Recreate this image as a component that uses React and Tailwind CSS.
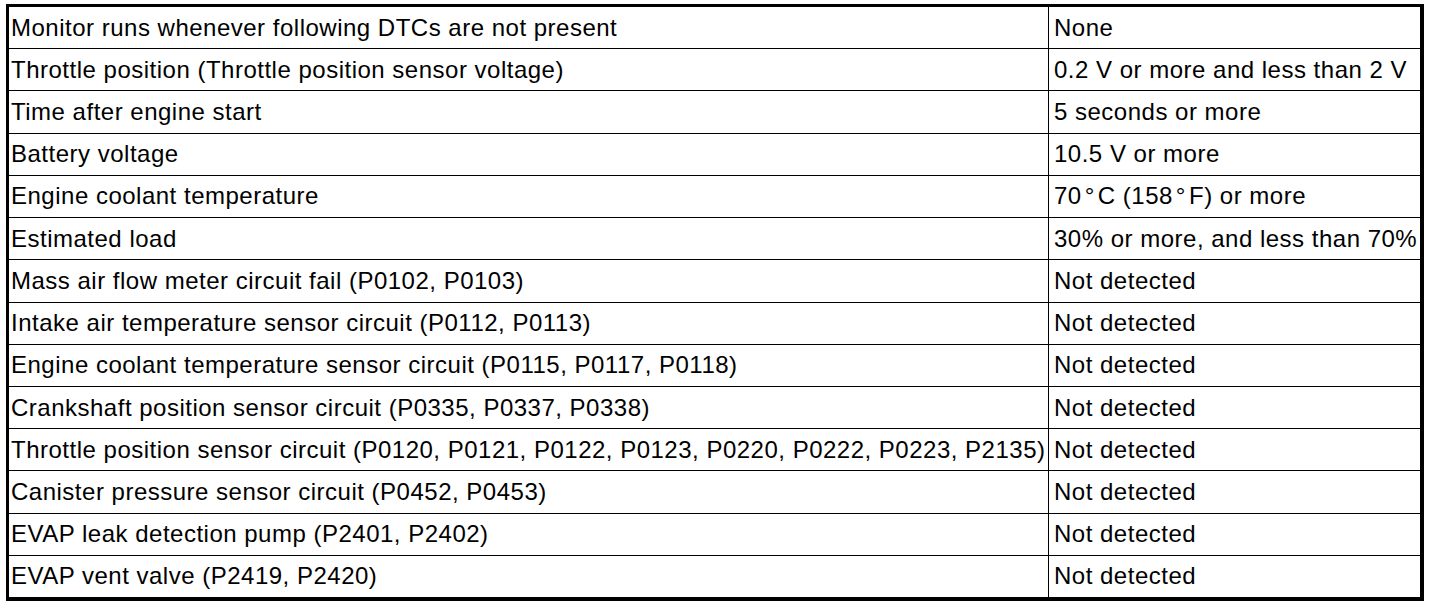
const rows = [
  ["Monitor runs whenever following DTCs are not present", "None"],
  ["Throttle position (Throttle position sensor voltage)", "0.2 V or more and less than 2 V"],
  ["Time after engine start", "5 seconds or more"],
  ["Battery voltage", "10.5 V or more"],
  ["Engine coolant temperature", "deg"],
  ["Estimated load", "30% or more, and less than 70%"],
  ["Mass air flow meter circuit fail (P0102, P0103)", "Not detected"],
  ["Intake air temperature sensor circuit (P0112, P0113)", "Not detected"],
  ["Engine coolant temperature sensor circuit (P0115, P0117, P0118)", "Not detected"],
  ["Crankshaft position sensor circuit (P0335, P0337, P0338)", "Not detected"],
  [
    "Throttle position sensor circuit (P0120, P0121, P0122, P0123, P0220, P0222, P0223, P2135)",
    "Not detected",
  ],
  ["Canister pressure sensor circuit (P0452, P0453)", "Not detected"],
  ["EVAP leak detection pump (P2401, P2402)", "Not detected"],
  ["EVAP vent valve (P2419, P2420)", "Not detected"],
];

const Deg = () => <span className="mx-[3px]">°</span>;

const App = () => {
  return (
    <div className="min-h-screen bg-white pt-[4px] pl-[6px]">
      <div
        className="w-[1418px] h-[597px] flex flex-col border-black border-t-[3px] border-l-[3px] border-r-4 border-b-4 text-black text-[24px] tracking-[0.5px] leading-none whitespace-nowrap"
        style={{ fontFamily: '"Liberation Sans", Arial, sans-serif' }}
      >
        {rows.map(([cond, value], i) => (
          <div
            key={i}
            className={`flex-1 flex ${i > 0 ? "border-t border-black" : ""}`}
          >
            <div className="w-[1040px] flex items-center pl-[2px] border-r border-black">
              {cond}
            </div>
            <div className="flex-1 flex items-center pl-[5px]">
              {value === "deg" ? (
                <span>
                  70<Deg />C (158<Deg />F) or more
                </span>
              ) : (
                value
              )}
            </div>
          </div>
        ))}
      </div>
    </div>
  );
};

export default App;
